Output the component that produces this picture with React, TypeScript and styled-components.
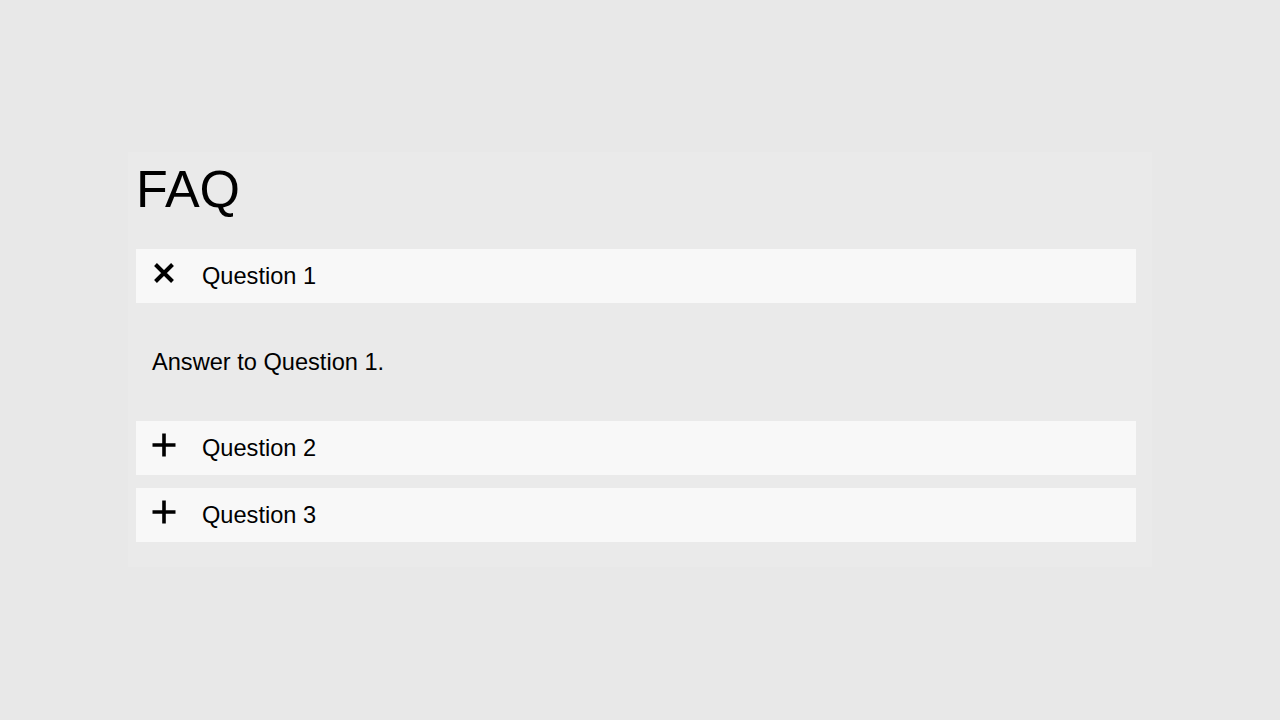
import React, { useState } from "react";
import styled, { createGlobalStyle } from "styled-components";

const Global = createGlobalStyle`
  html, body {
    margin: 0;
    padding: 0;
    background: #e8e8e8;
    font-family: "Liberation Sans", Arial, sans-serif;
    color: #000;
  }
`;

const Page = styled.div`
  min-height: 720px;
  padding-top: 152px;
  box-sizing: border-box;
`;

const Container = styled.section`
  width: 1024px;
  margin: 0 auto;
  padding: 9px 8px 25px;
  box-sizing: border-box;
  background: #eaeaea;
`;

const Title = styled.h1`
  font-size: 52px;
  font-weight: 400;
  line-height: 57px;
  margin: 0 0 31px;
`;

const List = styled.div`
  display: flex;
  flex-direction: column;
  width: 1000px;
`;

const Item = styled.div<{ $open: boolean }>`
  margin-bottom: ${(p) => (p.$open ? 0 : 13)}px;
  &:last-child {
    margin-bottom: 0;
  }
`;

const Header = styled.button`
  display: flex;
  align-items: center;
  width: 100%;
  height: 54px;
  padding: 0 0 0 16px;
  border: none;
  background: #f8f8f8;
  font-family: inherit;
  font-size: 23.6px;
  color: #000;
  cursor: pointer;
  text-align: left;
`;

const IconCell = styled.span`
  display: flex;
  align-items: center;
  justify-content: center;
  width: 24px;
  height: 24px;
  margin-right: 26px;
  margin-bottom: 6px;
`;

const Answer = styled.div`
  height: 118px;
  display: flex;
  align-items: center;
  padding-left: 16px;
  font-size: 23.6px;
  box-sizing: border-box;
`;

const XIcon = () => (
  <svg width="24" height="24" viewBox="0 0 24 24">
    <path d="M3.5 3.5 L20.5 20.5 M20.5 3.5 L3.5 20.5" stroke="#000" strokeWidth="4" fill="none" />
  </svg>
);

const PlusIcon = () => (
  <svg width="24" height="24" viewBox="0 0 24 24">
    <path d="M0.5 12 H23.5 M12 0.5 V23.5" stroke="#000" strokeWidth="3.6" fill="none" />
  </svg>
);

const faqs = [
  { q: "Question 1", a: "Answer to Question 1." },
  { q: "Question 2", a: "Answer to Question 2." },
  { q: "Question 3", a: "Answer to Question 3." },
];

export default function App() {
  const [open, setOpen] = useState<number | null>(0);
  return (
    <Page>
      <Global />
      <Container>
        <Title>FAQ</Title>
        <List>
          {faqs.map((f, i) => (
            <Item key={f.q} $open={open === i}>
              <Header onClick={() => setOpen(open === i ? null : i)}>
                <IconCell>{open === i ? <XIcon /> : <PlusIcon />}</IconCell>
                {f.q}
              </Header>
              {open === i && <Answer>{f.a}</Answer>}
            </Item>
          ))}
        </List>
      </Container>
    </Page>
  );
}
